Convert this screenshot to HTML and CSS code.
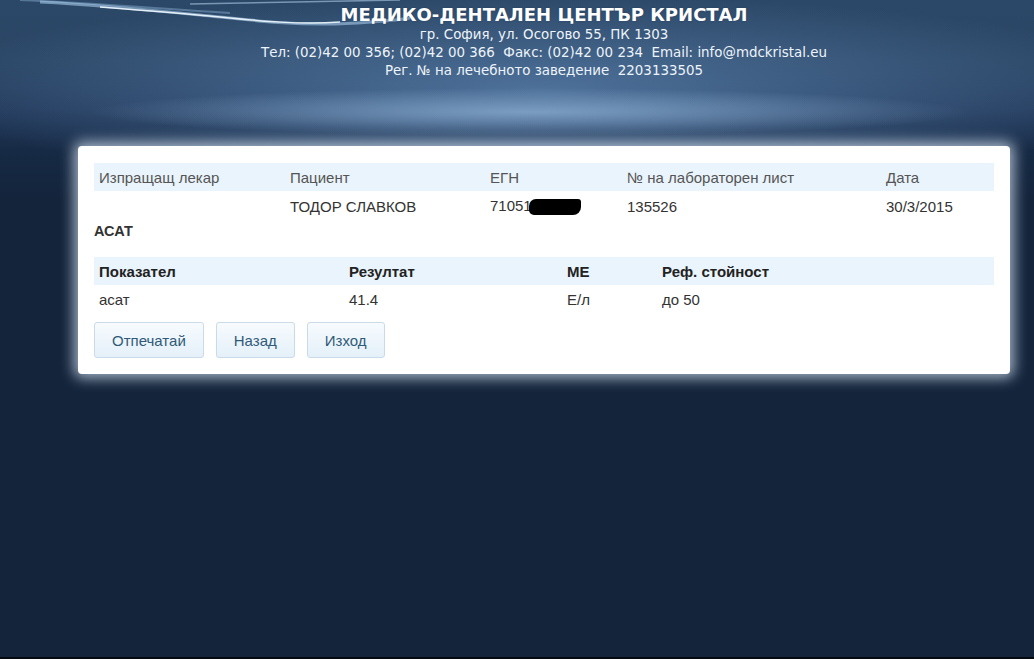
FILE: index.html
```html
<!DOCTYPE html>
<html lang="bg">
<head>
  <meta charset="UTF-8">
  <title>МДЦ Кристал - Резултати</title>
  <link rel="stylesheet" href="styles.css">
</head>
<body>
  <div class="page">
    <div class="header">
      <svg class="streaks" width="560" height="40" viewBox="0 0 560 40">
        <path d="M40 2 C100 5 150 10 200 15 C250 20 290 25 335 24 C360 23 390 21 410 18" stroke="rgba(190,225,255,0.5)" stroke-width="3" fill="none"/>
        <path d="M100 7 C140 10 180 13 220 17 C260 21 300 25 340 22" stroke="rgba(240,250,255,0.9)" stroke-width="1.5" fill="none"/>
        <path d="M190 4 C260 3 330 1 400 0" stroke="rgba(200,230,255,0.5)" stroke-width="1.5" fill="none"/>
        <path d="M20 0 C90 3 150 8 230 13" stroke="rgba(170,210,245,0.35)" stroke-width="2" fill="none"/>
      </svg>
      <h1 class="title">МЕДИКО-ДЕНТАЛЕН ЦЕНТЪР КРИСТАЛ</h1>
      <p class="line">гр. София, ул. Осогово 55, ПК 1303</p>
      <p class="line">Тел: (02)42 00 356; (02)42 00 366&nbsp; Факс: (02)42 00 234&nbsp; Email: info@mdckristal.eu</p>
      <p class="line">Рег. № на лечебното заведение&nbsp; 2203133505</p>
    </div>

    <div class="card">
      <table class="grid info">
        <thead>
          <tr>
            <th class="c-doc">Изпращащ лекар</th>
            <th class="c-pat">Пациент</th>
            <th class="c-egn">ЕГН</th>
            <th class="c-lab">№ на лабораторен лист</th>
            <th>Дата</th>
          </tr>
        </thead>
        <tbody>
          <tr>
            <td></td>
            <td>ТОДОР СЛАВКОВ</td>
            <td>71051<span class="redact"></span></td>
            <td>135526</td>
            <td>30/3/2015</td>
          </tr>
        </tbody>
      </table>

      <div class="section">АСАТ</div>

      <table class="grid results">
        <thead>
          <tr>
            <th class="c-name">Показател</th>
            <th class="c-res">Резултат</th>
            <th class="c-unit">МЕ</th>
            <th>Реф. стойност</th>
          </tr>
        </thead>
        <tbody>
          <tr>
            <td>асат</td>
            <td>41.4</td>
            <td>Е/л</td>
            <td>до 50</td>
          </tr>
        </tbody>
      </table>

      <div class="actions">
        <button class="btn">Отпечатай</button>
        <button class="btn">Назад</button>
        <button class="btn">Изход</button>
      </div>
    </div>
  </div>
</body>
</html>
```

FILE: styles.css
```css
html, body {
  margin: 0;
  padding: 0;
  height: 100%;
}
body {
  font-family: "Liberation Sans", Arial, sans-serif;
  background-color: #13243b;
  background-image:
    radial-gradient(ellipse 440px 24px at 530px 112px, rgba(170,205,240,0.55), rgba(170,205,240,0) 100%),
    radial-gradient(ellipse 640px 95px at 540px 90px, rgba(95,135,180,0.7), rgba(95,135,180,0) 100%),
    linear-gradient(to bottom, #2c4868 0px, #2a4564 60px, #22395a 110px, #172a45 150px, #13243b 200px);
  background-repeat: no-repeat;
  border-bottom: 2px solid #050a12;
  box-sizing: border-box;
}
.page {
  width: 932px;
  margin-left: 78px;
}
.header {
  position: relative;
  height: 146px;
  text-align: center;
  color: #fff;
  font-family: "DejaVu Sans", Verdana, sans-serif;
}
.streaks {
  position: absolute;
  left: -78px;
  top: 0;
}
.title {
  position: relative;
  margin: 0;
  padding-top: 4px;
  font-size: 18px;
  line-height: 22px;
  font-weight: bold;
  text-shadow: 0 0 2px rgba(20,40,70,0.4);
}
.line {
  position: relative;
  margin: 0;
  font-size: 13.4px;
  line-height: 18px;
  color: #eef4fa;
}
.card {
  background: #fff;
  border-radius: 4px;
  padding: 17px 16px 16px 16px;
  box-shadow: 0 0 14px 4px rgba(215,230,245,0.75);
}
.grid {
  width: 100%;
  border-collapse: collapse;
  font-size: 15px;
  color: #333;
}
.grid th, .grid td {
  text-align: left;
  padding: 0 5px;
}
.grid thead tr {
  background: #eaf4fc;
}
.grid th {
  height: 28px;
}
.grid td {
  height: 29px;
}
.info td {
  height: 30px;
  color: #333;
}
.info th {
  font-weight: normal;
  color: #555;
}
.c-doc { width: 181px; }
.c-pat { width: 190px; }
.c-egn { width: 127px; }
.c-lab { width: 249px; }
.c-name { width: 240px; }
.c-res { width: 208px; }
.c-unit { width: 85px; }
.results th {
  font-weight: bold;
  color: #222;
}
.redact {
  display: inline-block;
  width: 52px;
  height: 16px;
  background: #000;
  border-radius: 7px 3px 8px 5px;
  vertical-align: -4px;
  margin-left: -3px;
}
.section {
  font-size: 14.5px;
  font-weight: bold;
  color: #333;
  line-height: 16px;
  margin-top: 2px;
  margin-bottom: 18px;
}
.actions {
  display: flex;
  gap: 12px;
  margin-top: 8px;
}
.btn {
  font-family: "Liberation Sans", Arial, sans-serif;
  font-size: 15px;
  color: #2f5a78;
  height: 36px;
  padding: 0 17px;
  border: 1px solid #c9dbe8;
  border-radius: 3px;
  background: linear-gradient(to bottom, #f7fbfe, #e4f0f9);
}
```
